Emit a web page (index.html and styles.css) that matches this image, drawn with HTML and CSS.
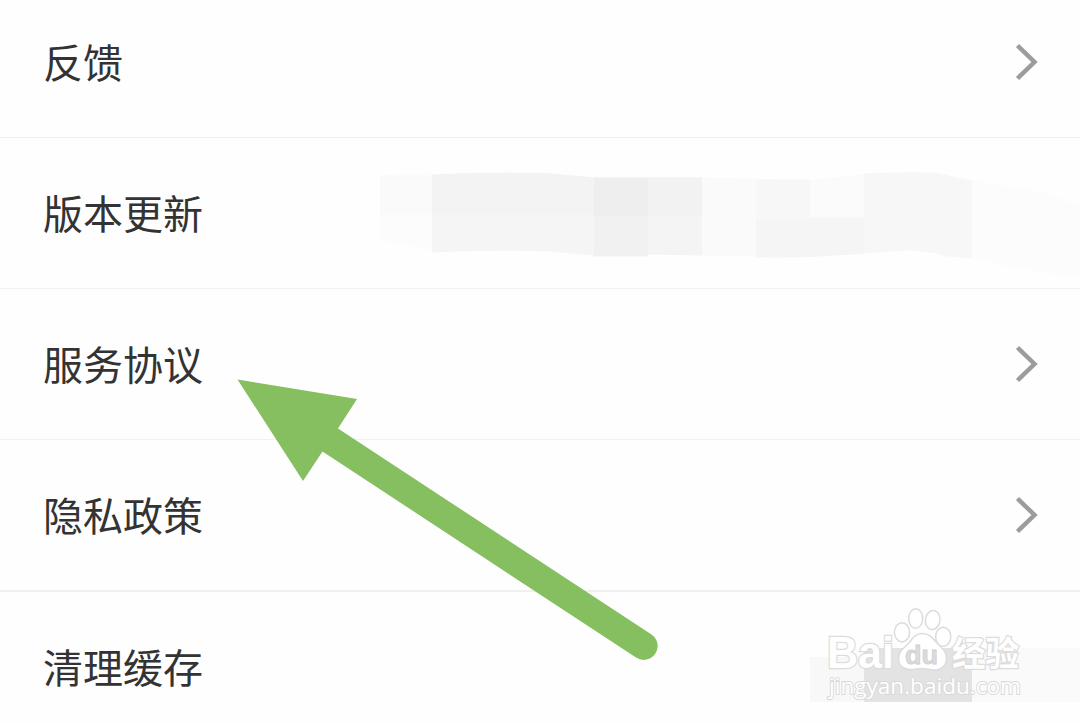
FILE: index.html
```html
<!DOCTYPE html>
<html lang="zh-CN">
<head>
    <meta charset="UTF-8">
    <meta name="viewport" content="width=device-width, initial-scale=1.0">
    <title>设置</title>
    <link rel="stylesheet" href="styles.css">
</head>
<body>
    <div class="page">
        <div class="row row-first">
            <span class="label">反馈</span>
            <svg class="chevron" viewBox="0 0 24 40"><path d="M3.5 3.5 L20.5 20 L3.5 36.5" /></svg>
        </div>
        <div class="row">
            <span class="label">版本更新</span>
            <!-- 版本号遮挡 -->
            <svg class="mosaic" viewBox="370 150.5 710 125">
                <path d="M380 175 L432 172 V250 L380 240 Z" fill="#fcfcfc" />
                <path d="M380 175 H432 V214 H380 Z" fill="#fafafa" />
                <path d="M432 174 Q500 171 550 173 L594 177 V255 L550 251 Q490 249 432 252 Z" fill="#f5f5f5" />
                <path d="M432 174 Q500 171 550 173 L594 177 V214 H432 Z" fill="#f3f3f3" />
                <path d="M594 177 H648 V256 H594 Z" fill="#f1f1f1" />
                <path d="M594 177 H648 V216 H594 Z" fill="#eeeeee" />
                <path d="M648 177 H702 V255 L648 254 Z" fill="#f4f4f4" />
                <path d="M648 177 H702 V215 H648 Z" fill="#f2f2f2" />
                <path d="M702 177 L756 178 V256 H702 Z" fill="#fafafa" />
                <path d="M756 179 L810 180 L864 174 V253 Q810 258 756 257 Z" fill="#f5f5f5" />
                <path d="M756 179 H810 V219 H756 Z" fill="#f7f7f7" />
                <path d="M810 180 L864 174 V217 H810 Z" fill="#fbfbfb" />
                <path d="M864 173 Q905 171 935 172 L972 180 V258 L946 256 Q930 250 905 250 L864 253 Z" fill="#f7f7f7" />
                <path d="M972 180 L1050 193 L1080 207 V276 L1030 270 L972 258 Z" fill="#fcfcfc" />
            </svg>
        </div>
        <div class="row">
            <span class="label">服务协议</span>
            <svg class="chevron" viewBox="0 0 24 40"><path d="M3.5 3.5 L20.5 20 L3.5 36.5" /></svg>
        </div>
        <div class="row row-group-end">
            <span class="label">隐私政策</span>
            <svg class="chevron" viewBox="0 0 24 40"><path d="M3.5 3.5 L20.5 20 L3.5 36.5" /></svg>
        </div>
        <div class="row row-last">
            <span class="label">清理缓存</span>
        </div>

        <!-- 指向服务协议的箭头 -->
        <svg class="arrow" viewBox="230 370 440 300">
            <path d="M237.5 379.5 L357 399 L338 428.5 L651.5 634.5 A13.8 13.8 0 0 1 636 657.5 L322.5 451.5 L303 481 Z" />
        </svg>

        <!-- 水印 -->
        <svg class="watermark" viewBox="800 595 280 129">
            <path d="M810 657 H864 V702 H810 Z" fill="#f8f8f8" />
            <path d="M864 648 H972 V702 H864 Z" fill="#e3e3e3" />
            <path d="M972 648 H1080 V702 H972 Z" fill="#fafafa" />
            <g class="mark">
                <text class="mark-name" x="827" y="668" textLength="67" lengthAdjust="spacingAndGlyphs">Bai</text>
                <ellipse cx="902" cy="632.3" rx="7.6" ry="9.5" />
                <ellipse cx="915.7" cy="618.5" rx="7" ry="9.7" />
                <ellipse cx="932.7" cy="620" rx="7.3" ry="9.5" transform="rotate(8 932.7 620)" />
                <ellipse cx="943.2" cy="636.7" rx="7.6" ry="9.5" />
                <path d="M922 633.5 C915 633.5 912 639 909 643 C904 648 898.5 651 898.5 659 C898.5 666 904 669.5 910 669.5 C915 669.5 918 668.5 922 668.5 C926 668.5 930 670 935 670 C942 670 946.5 665 946.5 658 C946.5 651 941 647 936 642 C932 637 929 633.5 922 633.5 Z" />
                <text class="mark-cjk" x="952" y="666" textLength="67" lengthAdjust="spacingAndGlyphs">经验</text>
            </g>
            <text class="mark-du" x="905" y="664" textLength="33" lengthAdjust="spacingAndGlyphs">du</text>
            <text class="mark-url" x="829" y="694" textLength="192" lengthAdjust="spacingAndGlyphs">jingyan.baidu.com</text>
        </svg>
    </div>
</body>
</html>
```

FILE: styles.css
```css
body {
    margin: 0;
    background-color: #fefefe;
    font-family: "Noto Sans CJK SC", sans-serif;
    color: #333;
}
.page {
    position: relative;
    height: 724px;
    overflow: hidden;
}
.row {
    display: flex;
    align-items: center;
    justify-content: space-between;
    box-sizing: border-box;
    height: 151px;
    padding-left: 43px;
    border-bottom: 1px solid #f1f1f1;
}
.row-first {
    height: 138px;
    padding-bottom: 13px;
}
.row-group-end {
    height: 152px;
    border-bottom: 2px solid #f0f0f0;
}
.row-last {
    border-bottom: none;
}
.label {
    padding-bottom: 3px;
    font-size: 40px;
    line-height: 60px;
}
.chevron {
    width: 24px;
    height: 40px;
    margin-right: 42px;
}
.chevron path {
    fill: none;
    stroke: #9c9c9c;
    stroke-width: 4.5;
}
.mosaic {
    width: 710px;
    height: 125px;
}
/* 箭头和水印浮在列表上方 */
.arrow {
    position: absolute;
    left: 230px;
    top: 370px;
    width: 440px;
    height: 300px;
    fill: #85bf60;
}
.watermark {
    position: absolute;
    right: 0;
    bottom: 0;
    width: 280px;
    height: 129px;
}
.mark {
    fill: #fff;
    stroke: #dcdcdc;
    stroke-width: 1.5;
}
.mark text {
    stroke-width: 2.5;
    paint-order: stroke;
    font-weight: bold;
}
.mark-name {
    font-family: "Liberation Sans", sans-serif;
    font-size: 45px;
}
.mark-cjk {
    font-size: 34px;
}
.mark-du {
    font-family: "Liberation Sans", sans-serif;
    font-size: 26px;
    font-weight: bold;
    fill: #dcdcdc;
    stroke: #cfcfcf;
    stroke-width: 0.8;
}
.mark-url {
    font-family: "Open Sans", sans-serif;
    font-size: 22px;
    fill: #fff;
    stroke: #dadada;
    stroke-width: 2;
    paint-order: stroke;
}
```
